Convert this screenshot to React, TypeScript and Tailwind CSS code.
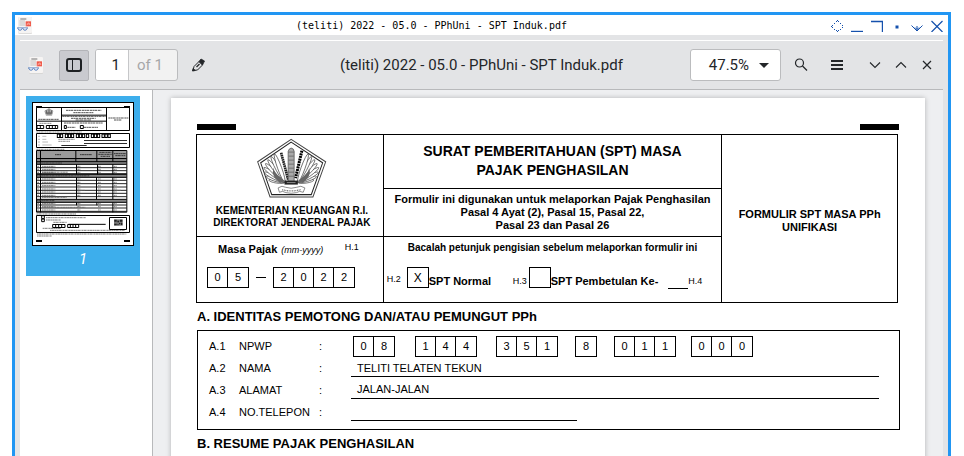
import type { ReactNode } from "react";

const FILE_NAME = "(teliti) 2022 - 05.0 - PPhUni - SPT Induk.pdf";

function DocumentIcon() {
  return (
    <svg viewBox="0 0 48 51" className="h-[17px] w-4 shrink-0" aria-hidden="true">
      <rect x="4" y="1" width="41" height="49" rx="2" fill="#d4d2d0" />
      <rect x="4" y="0" width="41" height="48" rx="2" fill="#f6f4f3" />
      <path d="M10 6h18" stroke="#777" strokeWidth="3" />
      <path d="M7 12h17M7 18h17M7 24h17" stroke="#c2c0bf" strokeWidth="3" />
      <rect x="26" y="13" width="16" height="15" fill="#ef5848" />
      <path d="M29 25l6-8 4 7M29 21h10" stroke="#fbb9b0" strokeWidth="2" fill="none" />
      <path d="M0 33h33" stroke="#4a76b8" strokeWidth="3" />
      <path d="M3 34q1 6 6 6t6-6M18 34q1 6 6 6t6-6" stroke="#4a76b8" strokeWidth="2.500" fill="#dfe9f8" />
    </svg>
  );
}

function WindowButton({ label, children }: { label: string; children: ReactNode }) {
  return (
    <button type="button" aria-label={label} className="flex h-5 w-5 items-center justify-center">
      <svg viewBox="0 0 12 12" className="h-3 w-3" fill="none" stroke="#1551ad">
        {children}
      </svg>
    </button>
  );
}

function TitleBar() {
  return (
    <header className="grid h-5 grid-cols-[1fr_auto_1fr] items-center bg-white">
      <div className="pl-0.5">
        <DocumentIcon />
      </div>
      <h1 className="pt-px pr-[100px] font-['DejaVu_Sans_Mono',monospace] text-[10px] leading-5 whitespace-pre text-black">
        {FILE_NAME}
      </h1>
      <div className="flex justify-end pr-px">
        <WindowButton label="Move">
          <g fill="#1551ad" stroke="none" shapeRendering="crispEdges">
            <path d="M5 1h1v1h-1zM7 1h1v1h-1zM6 0h1v1h-1zM3 3h1v1h-1zM9 3h1v1h-1zM1 5h1v1h-1zM1 7h1v1h-1zM0 6h1v1h-1zM11 5h1v1h-1zM11 7h1v1h-1zM3 9h1v1h-1zM9 9h1v1h-1zM5 10h1v1h-1zM7 10h1v1h-1zM6 11h1v1h-1z" />
          </g>
        </WindowButton>
        <WindowButton label="Minimize">
          <path d="M0 11.500h12" strokeWidth="1.400" />
        </WindowButton>
        <WindowButton label="Maximize">
          <path d="M0 1.500h11.500v10.500" strokeWidth="1.400" />
        </WindowButton>
        <WindowButton label="Stick">
          <path d="M4.500 7h3" strokeWidth="3" />
        </WindowButton>
        <WindowButton label="Shade">
          <path d="M0.500 5.500l5.500 5.500 5.500-5.500M6 6v4M4 7.500l2 2 2-2" />
        </WindowButton>
        <WindowButton label="Close">
          <path d="M0.500 1l11 11M11.500 1l-11 11" strokeWidth="1.200" />
        </WindowButton>
      </div>
    </header>
  );
}

function ToolButton({ label, children }: { label: string; children: ReactNode }) {
  return (
    <button type="button" aria-label={label} className="flex h-8 w-4 items-center justify-center">
      <svg viewBox="0 0 16 16" className="h-4 w-4" fill="none" stroke="#232629">
        {children}
      </svg>
    </button>
  );
}

function Toolbar() {
  return (
    <div className="grid h-[50px] grid-cols-[1fr_auto_1fr] items-center border-t border-b border-t-white border-b-[#b8b9bb] font-[Roboto,sans-serif] text-[15px] text-[#232629]">
      <div className="flex items-center pl-2">
        <DocumentIcon />
        <button
          type="button"
          aria-label="Toggle side pane"
          aria-pressed="true"
          className="ml-[15px] flex h-[31px] w-[30px] items-center justify-center rounded-xs border border-[#b3b4b8] bg-[#c9cacf]"
        >
          <svg viewBox="0 0 16 14" className="h-3.5 w-4" fill="none" stroke="#1d2023">
            <rect x="1" y="1" width="14" height="12" rx="2" strokeWidth="2" />
            <path d="M6.500 2v10" />
          </svg>
        </button>
        <label className="ml-1.5 flex h-8 w-[83px] items-center rounded-[3px] border border-[#bbbcbe] bg-[#f2f2f2]">
          <input
            aria-label="Page number"
            defaultValue="1"
            className="h-full w-8 rounded-l-xs bg-white pr-2 text-right outline-none"
          />
          <span className="flex h-full flex-1 items-center border-l border-[#c6c7c9] pl-2 text-[#a6a7a9]">of 1</span>
        </label>
        <div className="ml-3">
          <ToolButton label="Annotate">
            <path d="M3 13.500l1-4 5-5 3.500 3.500-5 5z" />
            <path d="M9 4.500l2-2.500 3.500 2-2 4z" fill="#232629" strokeWidth="0.800" />
            <path d="M6.500 10l3-3" strokeWidth="1.200" />
            <path d="M2.500 14l.7-2.500 2 2z" fill="#232629" />
          </ToolButton>
        </div>
      </div>
      <h2 className="whitespace-pre">{FILE_NAME}</h2>
      <div className="flex items-center justify-end pr-2">
        <button
          type="button"
          className="mr-3 flex h-8 w-[91px] items-center justify-end gap-2.5 rounded-[3px] border border-[#bbbcbe] bg-white pr-[11px]"
        >
          47.5%
          <svg viewBox="0 0 10 5" className="h-[5px] w-2.5" fill="#232629" aria-hidden="true">
            <path d="M0 0h10l-5 5z" />
          </svg>
        </button>
        <ToolButton label="Search">
          <circle cx="6.500" cy="6" r="4" strokeWidth="1.200" />
          <path d="M9.500 9l4.500 4.500" strokeWidth="1.300" />
        </ToolButton>
        <div className="ml-5">
          <ToolButton label="Menu">
            <path d="M2 4h12M2 8h12M2 12h12" strokeWidth="2" />
          </ToolButton>
        </div>
        <div className="ml-[22px] flex gap-2.5">
          <ToolButton label="Minimize document">
            <path d="M3 5.500l5 5 5-5" strokeWidth="1.100" />
          </ToolButton>
          <ToolButton label="Maximize document">
            <path d="M3 10.500l5-5 5 5" strokeWidth="1.100" />
          </ToolButton>
          <ToolButton label="Close document">
            <path d="M4 4l8 8M12 4l-8 8" strokeWidth="1.200" />
          </ToolButton>
        </div>
      </div>
    </div>
  );
}

function PageThumbnail() {
  const lines = [243, 252, 261, 281, 291, 301, 311, 320, 330, 355, 364, 374];
  const digits = [142, 151, 166, 175, 184, 199, 208, 217, 229, 244, 253, 262, 276, 285, 294];
  return (
    <svg viewBox="66 51 306 432" className="h-36 w-full" preserveAspectRatio="none" aria-label="Page 1">
      <rect x="67.500" y="52.500" width="303" height="429" fill="#fff" stroke="#000" strokeWidth="3" />
      <path d="M78 63h18v5H78zM342 63h18v5h-18zM78 465h18v6H78zM342 465h18v6h-18z" />
      <g fill="none" stroke="#000" strokeWidth="3">
        <path d="M79.500 67.500h279v69h-279zM154.500 67v69M289.500 67v69M154 90.500h135M79 108.500h210M79.500 145.500h279v42h-279z" />
        <path d="M81 121.500h20v9H81zM91 121v9M109 121.500h34v9h-34zM118 121v9M127 121v9M136 121v9M163 121.500h6v9h-6zM211 121.500h9v9h-9z" />
        <path d="M222 166.500h129M222 175.500h129M154 181.500h76" strokeWidth="2.500" />
        {digits.map((x) => (
          <rect key={x} x={x} y="147.500" width="7" height="10" />
        ))}
      </g>
      <path d="M117 69l13 9-4 14h-18l-5-14z" fill="#aaa" />
      <path d="M108 75l4 13M126 75l-4 13M117 73v16M107 84h20" stroke="#444" strokeWidth="2" />
      <g stroke="#555" strokeWidth="3" strokeDasharray="7 1 4 1 9 2">
        <path d="M85 103h62M168 76h106M190 83h60M157 94h130M183 100h74M197 105h46M162 114h116M295 99h60M312 105h22M172 127h25M222 127h42" />
        <path d="M88 115h36M79 141h136M79 193h85M145 163h50M145 169h35" strokeWidth="2" />
      </g>
      <g stroke="#999" strokeWidth="2">
        <path d="M84 154h6M97 154h12M84 163h6M97 163h12M84 171h6M97 171h17M84 180h6M97 180h28" />
      </g>
      <rect x="79" y="197" width="271" height="33" fill="#9b9b9b" />
      <rect x="79" y="221" width="271" height="17" fill="#858585" />
      <rect x="79" y="268" width="271" height="9" fill="#858585" />
      <rect x="79" y="343" width="271" height="9" fill="#858585" />
      <g stroke="#000" strokeWidth="3" fill="none">
        <path d="M79.500 196.500h271v185h-271zM79 220.500h271M79 230h271M79 238h271M79 268h271M79 277h271M79 343h271M79 352h271M91.500 197v185" />
        <path d="M197.500 197v33M260.500 197v33M308.500 197v33M199.500 238v30M262.500 238v30M308.500 238v30M199.500 277v66M259.500 277v66M308.500 277v66M199.500 352v9M260.500 352v9M308.500 352v30" />
        {lines.map((y) => (
          <path key={y} d={`M79 ${y + 5}h271`} strokeWidth="2.600" />
        ))}
      </g>
      <g stroke="#666" strokeWidth="2.500" strokeDasharray="5 1 8 1 3 1">
        <path d="M135 209h19M210 209h36M268 202h36M265 208h40M272 214h28M312 206h36M316 212h30" stroke="#222" />
        <path d="M81 234h75M81 272.500h158M81 347h53" stroke="#333" />
        {lines.map((y) => (
          <path key={y} d={`M82 ${y + 1}h5M96 ${y + 1}h40M202 ${y + 1}h9M264 ${y + 1}h8M311 ${y + 1}h9`} />
        ))}
        <path d="M96 261.500h78M96 337h74M96 367h130M202 316h22M311 316h22M79 387h120M108 398h120M108 405h45M130 412h40M98 430h55M120 436h225M81 447h268M81 453h45" />
      </g>
      <g fill="none" stroke="#000" strokeWidth="3">
        <path d="M79.500 391.500h279v51h-279zM95 392h8v9h-8zM95 402h8v8h-8zM298.500 397.500h51v36h-51zM175 418h112" />
        <path d="M128 418.500h37v9h-37zM137 418v9M146 418v9M155 418v9M173 418.500h33v9h-33zM181 418v9M189 418v9M197 418v9" />
      </g>
      <path d="M312 403h26v19h-26z" fill="#777" />
      <path d="M313 404h7v6h-7zM330 404h7v6h-7zM313 416h7v5h-7zM322 407h5v5h-5zM327 414h4v4h-4zM333 413h4v7h-4zM322 418h4v3h-4z" fill="#222" />
    </svg>
  );
}

function Sidebar() {
  return (
    <aside className="w-[133px] shrink-0 border-r border-[#b8b9bb] bg-white pt-1.5 pr-3 pl-1.5">
      <button type="button" className="flex h-[180px] w-full flex-col items-center bg-[#3daeec] px-1.5 pt-1.5">
        <PageThumbnail />
        <span className="pt-0.5 font-[Roboto,sans-serif] text-[15px] text-white italic">1</span>
      </button>
    </aside>
  );
}

const FEATHERS = [
  { angle: 8, length: 48 },
  { angle: 17, length: 58 },
  { angle: 26, length: 68 },
  { angle: 35, length: 76 },
  { angle: 44, length: 80 },
  { angle: 53, length: 84 },
  { angle: 62, length: 87 },
  { angle: 70, length: 90 },
];

function Emblem() {
  const wing = (
    <g fill="#fff" stroke="#444" strokeWidth="2">
      {FEATHERS.map(({ angle, length }) => (
        <ellipse
          key={angle}
          cx={106 - length / 2}
          cy="156"
          rx={length / 2}
          ry="6"
          transform={`rotate(${angle} 106 156)`}
        />
      ))}
      <path d="M72 112q2 14 14 24l20 16-16 4q-16-10-20-28z" fill="#666" stroke="none" />
    </g>
  );
  return (
    <svg viewBox="20 24 212 179" className="h-[60px] w-[71px]" aria-label="Kementerian Keuangan" role="img">
      <path d="M125 28l103 67-38 105H62L25 95z" fill="#fff" stroke="#444" strokeWidth="3" />
      <path d="M125 36l94 62-34 95H67L34 98z" fill="none" stroke="#222" strokeWidth="3" />
      {wing}
      <g transform="matrix(-1 0 0 1 251 0)">{wing}</g>
      <path d="M95 68l21 80" stroke="#222" strokeWidth="8" strokeDasharray="5 1.500" />
      <path d="M157 62l-19 82" stroke="#000" strokeWidth="9" strokeDasharray="6 2" />
      <path d="M116 156V64q2-9 9-10 8 1 9 10v92z" fill="#aaa" stroke="#444" strokeWidth="2" />
      <path d="M116 66h18M117 78h16M117 90h16M117 102h16M117 114h16M117 126h16M117 138h16" stroke="#555" strokeWidth="2" />
      <path d="M105 151h40v12h-40z" fill="#222" />
      <path d="M112 157h26" stroke="#bbb" strokeWidth="2" />
      <path d="M86 173q12-9 22-2 17 6 34 0 12-7 24 2l-5 13q-12-6-20 1-16 4-32 0-10-7-19-1z" fill="#fff" stroke="#555" strokeWidth="2" />
      <path d="M98 178q27 8 56 0" stroke="#777" strokeWidth="4" strokeDasharray="3 2" fill="none" />
    </svg>
  );
}

function Digits({ value }: { value: string }) {
  return (
    <span className="flex h-[21px] w-fit divide-x divide-black border border-black">
      {value.split("").map((digit, index) => (
        <span key={index} className="flex w-5 items-center justify-center text-[11px]">
          {digit}
        </span>
      ))}
    </span>
  );
}

function CheckCell({ id, checked }: { id: string; checked: boolean }) {
  return (
    <span className="grid h-[21px] w-[22px] shrink-0 place-items-center">
      <input
        id={id}
        type="checkbox"
        defaultChecked={checked}
        className="col-start-1 row-start-1 h-full w-full appearance-none border border-black"
      />
      {checked && <span className="pointer-events-none col-start-1 row-start-1 text-xs leading-none">X</span>}
    </span>
  );
}

function FormHeader() {
  return (
    <section className="mr-0.5 grid h-[169px] grid-cols-[187fr_339fr_175fr] divide-x divide-black border border-black">
      <div className="flex flex-col">
        <div className="flex h-[102px] flex-col items-center border-b border-black pt-[3px] pl-1">
          <Emblem />
          <p className="pt-[7px] text-center text-[10px] leading-3 font-bold whitespace-nowrap">
            KEMENTERIAN KEUANGAN R.I.
            <br />
            DIREKTORAT JENDERAL PAJAK
          </p>
        </div>
        <div className="flex items-start pt-1 pl-[21px] leading-4">
          <p className="text-[11px] font-bold">Masa Pajak</p>
          <p className="pt-px pl-1 text-[9px] italic">(mm-yyyy)</p>
          <p className="ml-auto pr-6 text-[9px] leading-3">H.1</p>
        </div>
        <div className="flex items-center pt-[9px] pl-2.5">
          <Digits value="05" />
          <span className="mx-[7px] h-px w-2.5 bg-black" />
          <Digits value="2022" />
        </div>
      </div>
      <div className="flex flex-col text-center font-bold">
        <p className="h-[54px] border-b border-black pt-[7px] text-sm leading-[19px]">
          SURAT PEMBERITAHUAN (SPT) MASA
          <br />
          PAJAK PENGHASILAN
        </p>
        <p className="h-12 border-b border-black pt-1 text-[11px] leading-[13px] whitespace-nowrap">
          Formulir ini digunakan untuk melaporkan Pajak Penghasilan
          <br />
          Pasal 4 Ayat (2), Pasal 15, Pasal 22,
          <br />
          Pasal 23 dan Pasal 26
        </p>
        <p className="pt-[5px] text-[10px] leading-3">Bacalah petunjuk pengisian sebelum melaporkan formulir ini</p>
        <div className="flex items-start pt-[13px] pl-[3px] text-[11px] leading-[13px] whitespace-nowrap">
          <span className="w-5 pt-1.5 text-left text-[9px] font-normal">H.2</span>
          <span className="flex w-[106px] items-start font-normal">
            <CheckCell id="spt-normal" checked />
            <label htmlFor="spt-normal" className="pt-2 font-bold">
              SPT Normal
            </label>
          </span>
          <span className="w-4 pt-2 text-left text-[9px] font-normal">H.3</span>
          <CheckCell id="spt-pembetulan" checked={false} />
          <label htmlFor="spt-pembetulan" className="pt-2">
            SPT Pembetulan Ke-
          </label>
          <span className="ml-2.5 h-[22px] w-5 border-b border-black" />
          <span className="pt-2 text-[9px] font-normal">H.4</span>
        </div>
      </div>
      <p className="flex items-center justify-center pt-1 text-center text-[11px] leading-[13px] font-bold">
        FORMULIR SPT MASA PPh
        <br />
        UNIFIKASI
      </p>
    </section>
  );
}

function IdentityRow({ code, name, children }: { code: string; name: string; children: ReactNode }) {
  return (
    <div className="flex h-[22px] text-[11px] leading-[22px]">
      <dt className="flex w-[142px] shrink-0">
        <span className="w-[30px]">{code}</span>
        <span className="w-20">{name}</span>
        <span>:</span>
      </dt>
      <dd className="flex-1">{children}</dd>
    </div>
  );
}

function IdentitySection() {
  return (
    <section>
      <h3 className="pt-1 pl-px text-[13px] leading-5 font-bold">A. IDENTITAS PEMOTONG DAN/ATAU PEMUNGUT PPh</h3>
      <dl className="mt-[3px] ml-px h-[100px] border border-black pt-1 pr-5 pl-[11px]">
        <IdentityRow code="A.1" name="NPWP">
          <div className="grid grid-cols-[62px_81px_79px_39px_77px_62px] pt-px pl-0.5 leading-none">
            <Digits value="08" />
            <Digits value="144" />
            <Digits value="351" />
            <Digits value="8" />
            <Digits value="011" />
            <Digits value="000" />
          </div>
        </IdentityRow>
        <IdentityRow code="A.2" name="NAMA">
          <p className="h-5 border-b border-black pl-1.5">TELITI TELATEN TEKUN</p>
        </IdentityRow>
        <IdentityRow code="A.3" name="ALAMAT">
          <p className="h-5 border-b border-black pl-1.5 leading-5">JALAN-JALAN</p>
        </IdentityRow>
        <IdentityRow code="A.4" name="NO.TELEPON">
          <p className="h-5 w-[226px] border-b border-black" />
        </IdentityRow>
      </dl>
      <h3 className="pt-1 pl-px text-[13px] leading-5 font-bold">B. RESUME PAJAK PENGHASILAN</h3>
    </section>
  );
}

export default function App() {
  return (
    <div className="h-screen overflow-hidden bg-white pt-3 pr-[13px] pl-3">
      <div className="flex h-full flex-col border-x-[3px] border-t-[3px] border-[#2196f3] bg-[#e3e4e6]">
        <TitleBar />
        <div className="flex min-h-0 flex-1 flex-col px-[5px] pt-[5px]">
          <Toolbar />
          <div className="flex min-h-0 flex-1">
            <Sidebar />
            <main className="min-w-0 flex-1 overflow-hidden bg-[#eeeff1] px-[18px] pt-2">
              <article className="min-h-full bg-white px-[25px] pt-[26px] pb-10 font-['Liberation_Sans',Arial,sans-serif] text-black shadow-[0_0_5px_rgba(0,0,0,0.25)]">
                <div className="mb-1 flex h-1.5 justify-between pr-px pl-px">
                  <span className="w-[39px] bg-black" />
                  <span className="w-[39px] bg-black" />
                </div>
                <FormHeader />
                <IdentitySection />
              </article>
            </main>
          </div>
        </div>
      </div>
    </div>
  );
}
